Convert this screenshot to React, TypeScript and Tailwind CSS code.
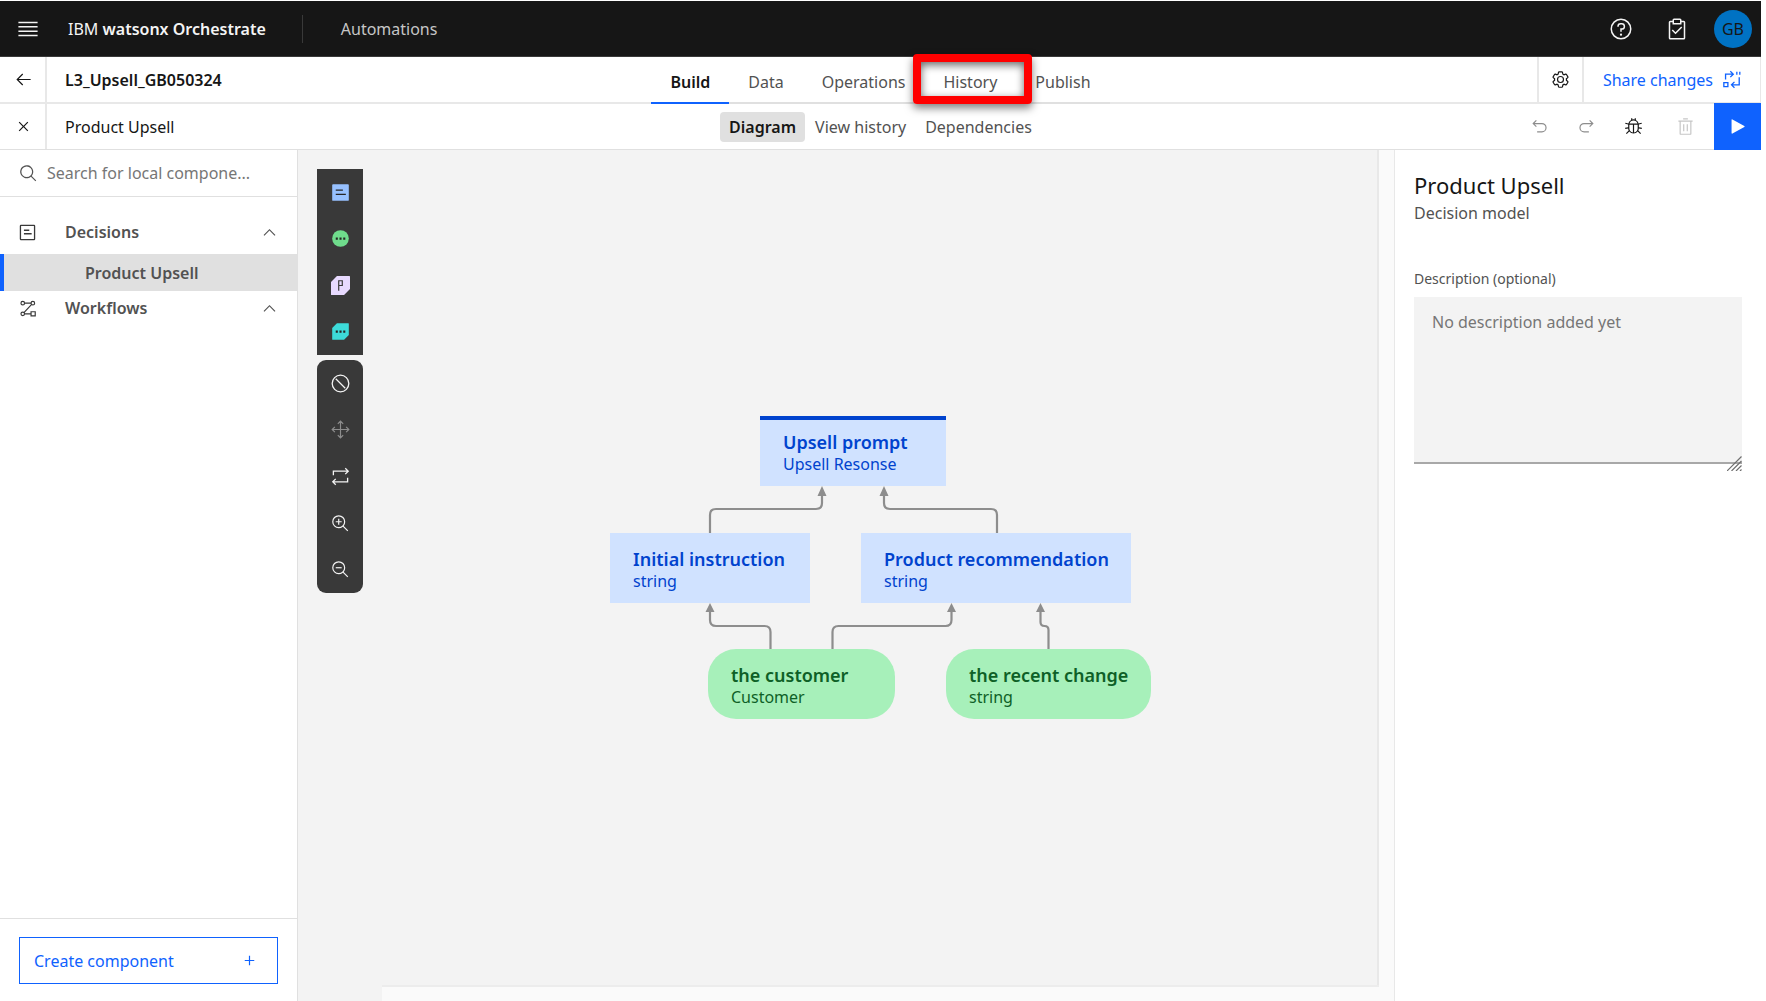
import type { ReactNode } from "react";

type IconProps = { size?: string; className?: string; children: ReactNode };

function Icon({ size = "size-[19px]", className = "", children }: IconProps) {
  return (
    <svg viewBox="0 0 32 32" fill="currentColor" aria-hidden="true" className={`${size} shrink-0 ${className}`}>
      {children}
    </svg>
  );
}

const paths = {
  arrowLeft: "M14 26 15.41 24.59 7.83 17 28 17 28 15 7.83 15 15.41 7.41 14 6 4 16 14 26z",
  close:
    "M17.4141 16 24 9.4141 22.5859 8 16 14.5859 9.4143 8 8 9.4141 14.5859 16 8 22.5859 9.4143 24 16 17.4141 22.5859 24 24 22.5859 17.4141 16z",
  search:
    "M29,27.5859l-7.5521-7.5521a11.0177,11.0177,0,1,0-1.4141,1.4141L27.5859,29ZM4,13a9,9,0,1,1,9,9A9.01,9.01,0,0,1,4,13Z",
  chevronUp: "M16 10 26 20 24.6 21.4 16 12.8 7.4 21.4 6 20z",
  settings:
    "M27,16.76c0-.25,0-.5,0-.76s0-.51,0-.77l1.92-1.68A2,2,0,0,0,29.3,11L26.94,7a2,2,0,0,0-1.73-1,2,2,0,0,0-.64.1l-2.43.82a11.35,11.35,0,0,0-1.31-.75l-.51-2.52a2,2,0,0,0-2-1.61H13.64a2,2,0,0,0-2,1.61l-.51,2.52a11.48,11.48,0,0,0-1.32.75L7.43,6.06A2,2,0,0,0,6.79,6,2,2,0,0,0,5.06,7L2.7,11a2,2,0,0,0,.41,2.51L5,15.24c0,.25,0,.5,0,.76s0,.51,0,.77L3.11,18.45A2,2,0,0,0,2.7,21L5.06,25a2,2,0,0,0,1.73,1,2,2,0,0,0,.64-.1l2.43-.82a11.35,11.35,0,0,0,1.31.75l.51,2.52a2,2,0,0,0,2,1.61h4.72a2,2,0,0,0,2-1.61l.51-2.52a11.48,11.48,0,0,0,1.32-.75l2.42.82a2,2,0,0,0,.64.1,2,2,0,0,0,1.73-1L29.3,21a2,2,0,0,0-.41-2.51ZM25.21,24l-3.43-1.16a8.86,8.86,0,0,1-2.71,1.57L18.36,28H13.64l-.71-3.55a9.36,9.36,0,0,1-2.7-1.57L6.79,24,4.43,20l2.72-2.4a8.9,8.9,0,0,1,0-3.13L4.43,12,6.79,8l3.43,1.16a8.86,8.86,0,0,1,2.71-1.57L13.64,4h4.72l.71,3.55a9.36,9.36,0,0,1,2.7,1.57L25.21,8,27.57,12l-2.72,2.4a8.9,8.9,0,0,1,0,3.13L27.57,20Z",
  settingsHub:
    "M16,22a6,6,0,1,1,6-6A5.94,5.94,0,0,1,16,22Zm0-10a3.91,3.91,0,0,0-4,4,3.91,3.91,0,0,0,4,4,3.91,3.91,0,0,0,4-4A3.91,3.91,0,0,0,16,12Z",
  undo: "M20,10H7.8149l3.5874-3.5859L10,5,4,11,10,17l1.4023-1.4146L7.8179,12H20a6,6,0,0,1,0,12H12v2h8a8,8,0,0,0,0-16Z",
  debug:
    "M29.83,20l.34-2L25,17.15V13c0-.08,0-.15,0-.23l5.06-1.36-.51-1.93-4.83,1.29A9,9,0,0,0,20,5V2H18V4.23a8.81,8.81,0,0,0-4,0V2H12V5a9,9,0,0,0-4.71,5.82L2.46,9.48,2,11.41,7,12.77c0,.08,0,.15,0,.23v4.15L1.84,18l.32,2L7,19.18a8.9,8.9,0,0,0,.82,3.57L3.29,27.29l1.42,1.42,4.19-4.2a9,9,0,0,0,14.2,0l4.19,4.2,1.42-1.42-4.54-4.54A8.9,8.9,0,0,0,25,19.18ZM15,25.92A7,7,0,0,1,9,19V13h6ZM9.29,11a7,7,0,0,1,13.42,0ZM23,19a7,7,0,0,1-6,6.92V13h6Z",
  trash:
    "M12 12h2v12h-2zM18 12h2v12h-2zM12 2h8v2h-8zM4,6V8H6V28a2,2,0,0,0,2,2H24a2,2,0,0,0,2-2V8h2V6ZM8,28V8H24V28Z",
  play: "M7,28a1,1,0,0,1-1-1V5a1,1,0,0,1,1.4819-.8763l20,11a1,1,0,0,1,0,1.7525l-20,11A1.0005,1.0005,0,0,1,7,28Z",
  add: "M17 15 17 8 15 8 15 15 8 15 8 17 15 17 15 24 17 24 17 17 24 17 24 15z",
  lens: "M21.4479,20A10.856,10.856,0,0,0,24,13,11,11,0,1,0,13,24a10.856,10.856,0,0,0,7-2.5521L27.5859,29,29,27.5859ZM13,22a9,9,0,1,1,9-9A9.01,9.01,0,0,1,13,22Z",
};

const tabs = ["Build", "Data", "Operations", "History", "Publish"];
const views = ["Diagram", "View history", "Dependencies"];

function Header() {
  return (
    <header className="flex h-14 shrink-0 items-center border-b border-[#393939] bg-[#161616] text-[#f4f4f4]">
      <button aria-label="Menu" className="flex size-14 items-center justify-center">
        <svg viewBox="0 0 20 20" fill="currentColor" className="size-6" aria-hidden="true">
          <path d="M2 14.8h16V16H2zM2 11.2h16v1.2H2zM2 7.6h16v1.2H2zM2 4h16v1.2H2z" />
        </svg>
      </button>
      <a href="#home" className="ml-3">
        IBM <span className="font-semibold">watsonx Orchestrate</span>
      </a>
      <span className="ml-9 h-7 w-px bg-[#393939]" />
      <a href="#automations" className="ml-[38px] text-[#c6c6c6]">
        Automations
      </a>
      <div className="ml-auto flex items-center pr-[9px]">
        <button aria-label="Help" className="flex w-14 justify-center">
          <Icon size="size-6">
            <path d="M16,2A14,14,0,1,0,30,16,14,14,0,0,0,16,2Zm0,26A12,12,0,1,1,28,16,12,12,0,0,1,16,28Z" />
            <circle cx="16" cy="23.5" r="1.5" />
            <path d="M17,8H15.5A4.49,4.49,0,0,0,11,12.5V13h2v-.5A2.5,2.5,0,0,1,15.5,10H17a2.5,2.5,0,0,1,0,5H15v4.5h2V17a4.5,4.5,0,0,0,0-9Z" />
          </Icon>
        </button>
        <button aria-label="Tasks" className="flex w-14 justify-center">
          <Icon size="size-6">
            <path d="M14 20.18 10.41 16.59 9 18 14 23 23 14 21.59 12.58 14 20.18z" />
            <path d="M25,5H22V4a2,2,0,0,0-2-2H12a2,2,0,0,0-2,2V5H7A2,2,0,0,0,5,7V28a2,2,0,0,0,2,2H25a2,2,0,0,0,2-2V7A2,2,0,0,0,25,5ZM12,4h8V8H12ZM25,28H7V7h3v3H22V7h3Z" />
          </Icon>
        </button>
        <button className="ml-[9px] flex size-[38px] items-center justify-center rounded-full bg-[#0072c3] text-[#161616]">
          GB
        </button>
      </div>
    </header>
  );
}

function ProjectBar() {
  return (
    <div className="grid h-[47px] shrink-0 grid-cols-[1fr_auto_1fr] border-b-2 border-[#e8e8e8]">
      <div className="flex items-center">
        <button aria-label="Back" className="flex h-full w-[47px] items-center justify-center border-r-2 border-[#e8e8e8] pl-0.5">
          <Icon>
            <path d={paths.arrowLeft} />
          </Icon>
        </button>
        <h1 className="ml-[18px] font-semibold text-[#161616]">L3_Upsell_GB050324</h1>
      </div>
      <nav className="-mb-0.5 flex">
        {tabs.map((tab) => (
          <button
            key={tab}
            className={
              tab === "Build"
                ? "border-b-2 border-[#0f62fe] px-[19px] pt-1 font-semibold text-[#161616]"
                : tab === "History"
                  ? "relative border-b-2 border-[#e0e0e0] px-[19px] pt-1 text-[#525252]"
                  : "border-b-2 border-[#e0e0e0] px-[19px] pt-1 text-[#525252]"
            }
          >
            {tab}
            {tab === "History" && (
              <span className="absolute -top-[3px] -right-4 -bottom-[2px] -left-[11px] z-10 rounded-[4px] border-8 border-[#ff0000] shadow-[0_4px_8px_rgba(0,0,0,0.5),inset_0_3px_9px_rgba(0,0,0,0.6)]" />
            )}
          </button>
        ))}
      </nav>
      <div className="flex items-center justify-end">
        <button aria-label="Settings" className="flex h-full w-[47px] items-center justify-center border-x-2 border-[#e8e8e8]">
          <Icon>
            <path d={paths.settings} />
            <path d={paths.settingsHub} />
          </Icon>
        </button>
        <button className="flex h-full items-center gap-[9px] border-r border-[#e8e8e8] pr-[19px] pl-[19px] text-[#0f62fe]">
          Share changes
          <Icon>
            <path
              d="M6 16V7h12M14 2l5 5-5 5M29 12v13H17M21 20l-5 5 5 5M25 3v5M30 3v5"
              fill="none"
              stroke="currentColor"
              strokeWidth="2.2"
            />
            <path d="M2 20h9v9H2zM4.2 22.2v4.6h4.6v-4.6z" fillRule="evenodd" />
          </Icon>
        </button>
      </div>
    </div>
  );
}

function ModelBar() {
  return (
    <div className="grid h-[46px] shrink-0 grid-cols-[1fr_auto_1fr] border-b border-[#e0e0e0]">
      <div className="flex items-center">
        <button aria-label="Close" className="flex h-full w-[47px] items-center justify-center border-r-2 border-[#e8e8e8] pl-0.5">
          <Icon>
            <path d={paths.close} />
          </Icon>
        </button>
        <h2 className="ml-[18px] text-[#161616]">Product Upsell</h2>
      </div>
      <nav className="flex items-center gap-px">
        {views.map((view) => (
          <button
            key={view}
            className={
              view === "Diagram"
                ? "h-[30px] rounded-[4px] bg-[#e0e0e0] px-[9px] font-semibold text-[#161616]"
                : "h-[30px] px-[9px] text-[#525252]"
            }
          >
            {view}
          </button>
        ))}
      </nav>
      <div className="flex items-center justify-end">
        <button aria-label="Undo" className="flex w-[47px] justify-center text-[#8d8d8d]">
          <Icon>
            <path d={paths.undo} />
          </Icon>
        </button>
        <button aria-label="Redo" className="flex w-[47px] justify-center text-[#8d8d8d]">
          <Icon className="-scale-x-100">
            <path d={paths.undo} />
          </Icon>
        </button>
        <button aria-label="Debug" className="flex w-[47px] justify-center text-[#161616]">
          <Icon>
            <path d={paths.debug} />
          </Icon>
        </button>
        <button aria-label="Delete" className="flex w-[57px] justify-center text-[#c6c6c6]">
          <Icon>
            <path d={paths.trash} />
          </Icon>
        </button>
        <button aria-label="Run" className="-my-px flex w-[47px] items-center justify-center self-stretch bg-[#0f62fe] text-white">
          <Icon>
            <path d={paths.play} />
          </Icon>
        </button>
      </div>
    </div>
  );
}

function Group({ label, icon }: { label: string; icon: ReactNode }) {
  return (
    <button className="flex h-[34px] w-full items-center px-[18px] text-left font-semibold text-[#525252]">
      {icon}
      <span className="ml-7 flex-1">{label}</span>
      <Icon className="text-[#525252]">
        <path d={paths.chevronUp} />
      </Icon>
    </button>
  );
}

function Sidebar() {
  return (
    <aside className="flex w-[298px] shrink-0 flex-col border-r border-[#e0e0e0]">
      <label className="flex h-[47px] shrink-0 items-center gap-[9px] border-b border-[#e0e0e0] pl-[19px] text-[#525252]">
        <Icon>
          <path d={paths.search} />
        </Icon>
        <input
          aria-label="Search for local components"
          placeholder="Search for local compone..."
          className="w-full min-w-0 outline-none placeholder:text-[#767676]"
        />
      </label>
      <nav className="flex-1 pt-[18px]">
        <Group
          label="Decisions"
          icon={
            <Icon className="text-[#393939]">
              <path d="M5 3h22a2 2 0 0 1 2 2v22a2 2 0 0 1-2 2H5a2 2 0 0 1-2-2V5a2 2 0 0 1 2-2zM5.2 5.2v21.6h21.6V5.200z" fillRule="evenodd" />
              <path d="M10 11h9v2.400h-9zM10 17h13v2.400H10z" />
            </Icon>
          }
        />
        <a
          href="#product-upsell"
          className="mt-[5px] flex h-[37px] items-center border-l-4 border-[#0f62fe] bg-[#e0e0e0] pl-[81px] font-semibold text-[#525252]"
        >
          Product Upsell
        </a>
        <Group
          label="Workflows"
          icon={
            <Icon className="text-[#393939]">
              <g fill="none" stroke="currentColor" strokeWidth="2">
                <circle cx="8" cy="7" r="3" />
                <circle cx="25" cy="7" r="3" />
                <circle cx="8" cy="25" r="3" />
                <path d="M11 7h11M23 9.200 10 22.800M11 25h11M22 21.500h7v7h-7z" />
              </g>
            </Icon>
          }
        />
      </nav>
      <div className="border-t border-[#e0e0e0] px-[19px] pt-[18px] pb-[17px]">
        <button className="flex h-[47px] w-full items-center justify-between border border-[#0f62fe] pr-[18px] pl-[14px] text-[#0f62fe]">
          Create component
          <Icon>
            <path d={paths.add} />
          </Icon>
        </button>
      </div>
    </aside>
  );
}

const palette = [
  {
    label: "Decision",
    art: (
      <>
        <rect x="2" y="2" width="28" height="28" rx="1.5" fill="#97c1ff" />
        <path d="M8 11h12v2H8zM8 18h17v2H8z" fill="#262626" />
      </>
    ),
  },
  {
    label: "Input data",
    art: (
      <>
        <circle cx="16" cy="16" r="14" fill="#6fdc8c" />
        <path d="M8 14.500h3.500V18H8zM14.300 14.500h3.500V18h-3.500zM20.600 14.500h3.500V18h-3.500z" fill="#262626" />
      </>
    ),
  },
  {
    label: "Prediction",
    art: (
      <>
        <path d="M10 0h21a1 1 0 0 1 1 1v21L22 32H1a1 1 0 0 1-1-1V10z" fill="#e8daff" />
        <path d="M13 25V8h6v8h-6" fill="none" stroke="#393939" strokeWidth="2" />
      </>
    ),
  },
  {
    label: "Function",
    art: (
      <>
        <path d="M10 2h19a1 1 0 0 1 1 1v19l-8 8H3a1 1 0 0 1-1-1V10z" fill="#3ddbd9" />
        <path d="M8 14.500h3.500V18H8zM14.300 14.500h3.500V18h-3.500zM20.600 14.500h3.500V18h-3.500z" fill="#262626" />
      </>
    ),
  },
];

const tools = [
  {
    label: "Clear selection",
    tone: "text-[#f4f4f4]",
    art: (
      <g fill="none" stroke="currentColor" strokeWidth="2.2">
        <circle cx="16" cy="16" r="14" />
        <path d="M8 8l16 16" />
      </g>
    ),
  },
  {
    label: "Move",
    tone: "text-[#8d8d8d]",
    art: (
      <path
        d="M16 2v28M2 16h28M11.500 6.500 16 2l4.500 4.500M11.500 25.500 16 30l4.500-4.500M6.500 11.500 2 16l4.500 4.500M25.500 11.500 30 16l-4.500 4.500"
        fill="none"
        stroke="currentColor"
        strokeWidth="2"
      />
    ),
  },
  {
    label: "Change layout",
    tone: "text-[#f4f4f4]",
    art: (
      <path
        d="M4 14V7h25M24 2l5 5-5 5M28 18v7H3M8 20l-5 5 5 5"
        fill="none"
        stroke="currentColor"
        strokeWidth="2.2"
      />
    ),
  },
  {
    label: "Zoom in",
    tone: "text-[#f4f4f4]",
    art: (
      <>
        <path d={paths.lens} />
        <path d="M18 12h-4V8h-2v4H8v2h4v4h2v-4h4z" />
      </>
    ),
  },
  {
    label: "Zoom out",
    tone: "text-[#f4f4f4]",
    art: (
      <>
        <path d={paths.lens} />
        <path d="M8 12h10v2H8z" />
      </>
    ),
  },
];

function Toolbox() {
  return (
    <div className="absolute top-[19px] left-[19px] flex w-[46px] flex-col gap-[5px]">
      <div className="flex h-[186px] flex-col bg-[#393939]">
        {palette.map((item) => (
          <button key={item.label} aria-label={item.label} className="flex flex-1 items-center justify-center">
            <Icon>{item.art}</Icon>
          </button>
        ))}
      </div>
      <div className="flex h-[233px] flex-col rounded-[9px] bg-[#393939]">
        {tools.map((item) => (
          <button key={item.label} aria-label={item.label} className={`flex flex-1 items-center justify-center ${item.tone}`}>
            <Icon>{item.art}</Icon>
          </button>
        ))}
      </div>
    </div>
  );
}

const nodes = [
  { title: "Upsell prompt", type: "Upsell Resonse", look: "left-[150px] top-0 w-[186px] border-t-4 border-[#0043ce] bg-[#d0e2ff] pt-[11px] text-[#0043ce]" },
  { title: "Initial instruction", type: "string", look: "left-0 top-[117px] w-[200px] bg-[#d0e2ff] pt-[15px] text-[#0043ce]" },
  { title: "Product recommendation", type: "string", look: "left-[251px] top-[117px] w-[270px] bg-[#d0e2ff] pt-[15px] text-[#0043ce]" },
  { title: "the customer", type: "Customer", look: "left-[98px] top-[233px] w-[187px] rounded-[28px] bg-[#a7f0ba] pt-[15px] text-[#0e6027]" },
  { title: "the recent change", type: "string", look: "left-[336px] top-[233px] w-[205px] rounded-[28px] bg-[#a7f0ba] pt-[15px] text-[#0e6027]" },
];

function Diagram() {
  return (
    <div className="relative h-[303px] w-[541px]">
      <svg viewBox="0 0 541 303" className="absolute inset-0 size-full" aria-hidden="true">
        <g fill="none" stroke="#8d8d8d" strokeWidth="2.2">
          <path d="M100 117V99q0-6 6-6h100q6 0 6-6V78" />
          <path d="M387 117V99q0-6-6-6H280q-6 0-6-6V78" />
          <path d="M160.500 233v-17q0-6-6-6H106q-6 0-6-6v-9" />
          <path d="M222.500 233v-17q0-6 6-6h107q6 0 6-6v-9" />
          <path d="M438.500 233v-19q0-4-4-4t-4-4v-11" />
        </g>
        <path
          d="M212 70l4.500 10h-9zM274 70l4.500 10h-9zM100 187l4.500 9h-9zM341.500 187l4.500 9h-9zM430.500 187l4.500 9h-9z"
          fill="#8d8d8d"
        />
      </svg>
      {nodes.map((node) => (
        <div key={node.title} className={`absolute h-[70px] pl-[23px] whitespace-nowrap ${node.look}`}>
          <div className="text-lg leading-[22px] font-semibold">{node.title}</div>
          <div className="leading-[22px]">{node.type}</div>
        </div>
      ))}
    </div>
  );
}

function Workspace() {
  return (
    <main className="flex min-w-0 flex-1 flex-col bg-[#fafafa]">
      <div className="flex min-h-0 flex-1">
        <div className="relative flex flex-1 items-center justify-center border-r-2 border-[#e8e8e8] bg-[#f3f3f3] pl-[86px]">
          <Toolbox />
          <Diagram />
        </div>
        <div className="w-[15px]" />
      </div>
      <div className="flex h-4">
        <div className="w-[84px] bg-[#f3f3f3]" />
        <div className="flex-1 border-t-2 border-[#ececec]" />
        <div className="w-[15px]" />
      </div>
    </main>
  );
}

function Details() {
  return (
    <aside className="w-[367px] shrink-0 border-l border-[#e8e8e8] pt-[18px] pr-[19px] pl-[19px]">
      <h2 className="text-[22px] leading-[34px] text-[#161616]">Product Upsell</h2>
      <p className="leading-[22px] text-[#525252]">Decision model</p>
      <label htmlFor="description" className="mt-[45px] block text-sm leading-5 text-[#525252]">
        Description (optional)
      </label>
      <div className="relative mt-2">
        <textarea
          id="description"
          placeholder="No description added yet"
          className="block h-[167px] w-full resize-none border-b-2 border-[#a8a8a8] bg-[#f3f3f3] px-[18px] py-[13px] outline-none placeholder:text-[#767676]"
        />
        <svg viewBox="0 0 15 15" className="absolute right-0 -bottom-[7px] size-[15px]" fill="none" stroke="#6f6f6f" strokeWidth="1.2" aria-hidden="true">
          <path d="M0 15 14.500 0.500M4.500 15 14.500 5M9 15l5.500-5.500M13 15l1.500-1.500" />
        </svg>
      </div>
    </aside>
  );
}

export default function App() {
  return (
    <div className="flex h-screen flex-col bg-white pt-px pr-[5px] font-['Noto_Sans',sans-serif] text-base text-[#161616]">
      <Header />
      <ProjectBar />
      <ModelBar />
      <div className="flex min-h-0 flex-1">
        <Sidebar />
        <Workspace />
        <Details />
      </div>
    </div>
  );
}
